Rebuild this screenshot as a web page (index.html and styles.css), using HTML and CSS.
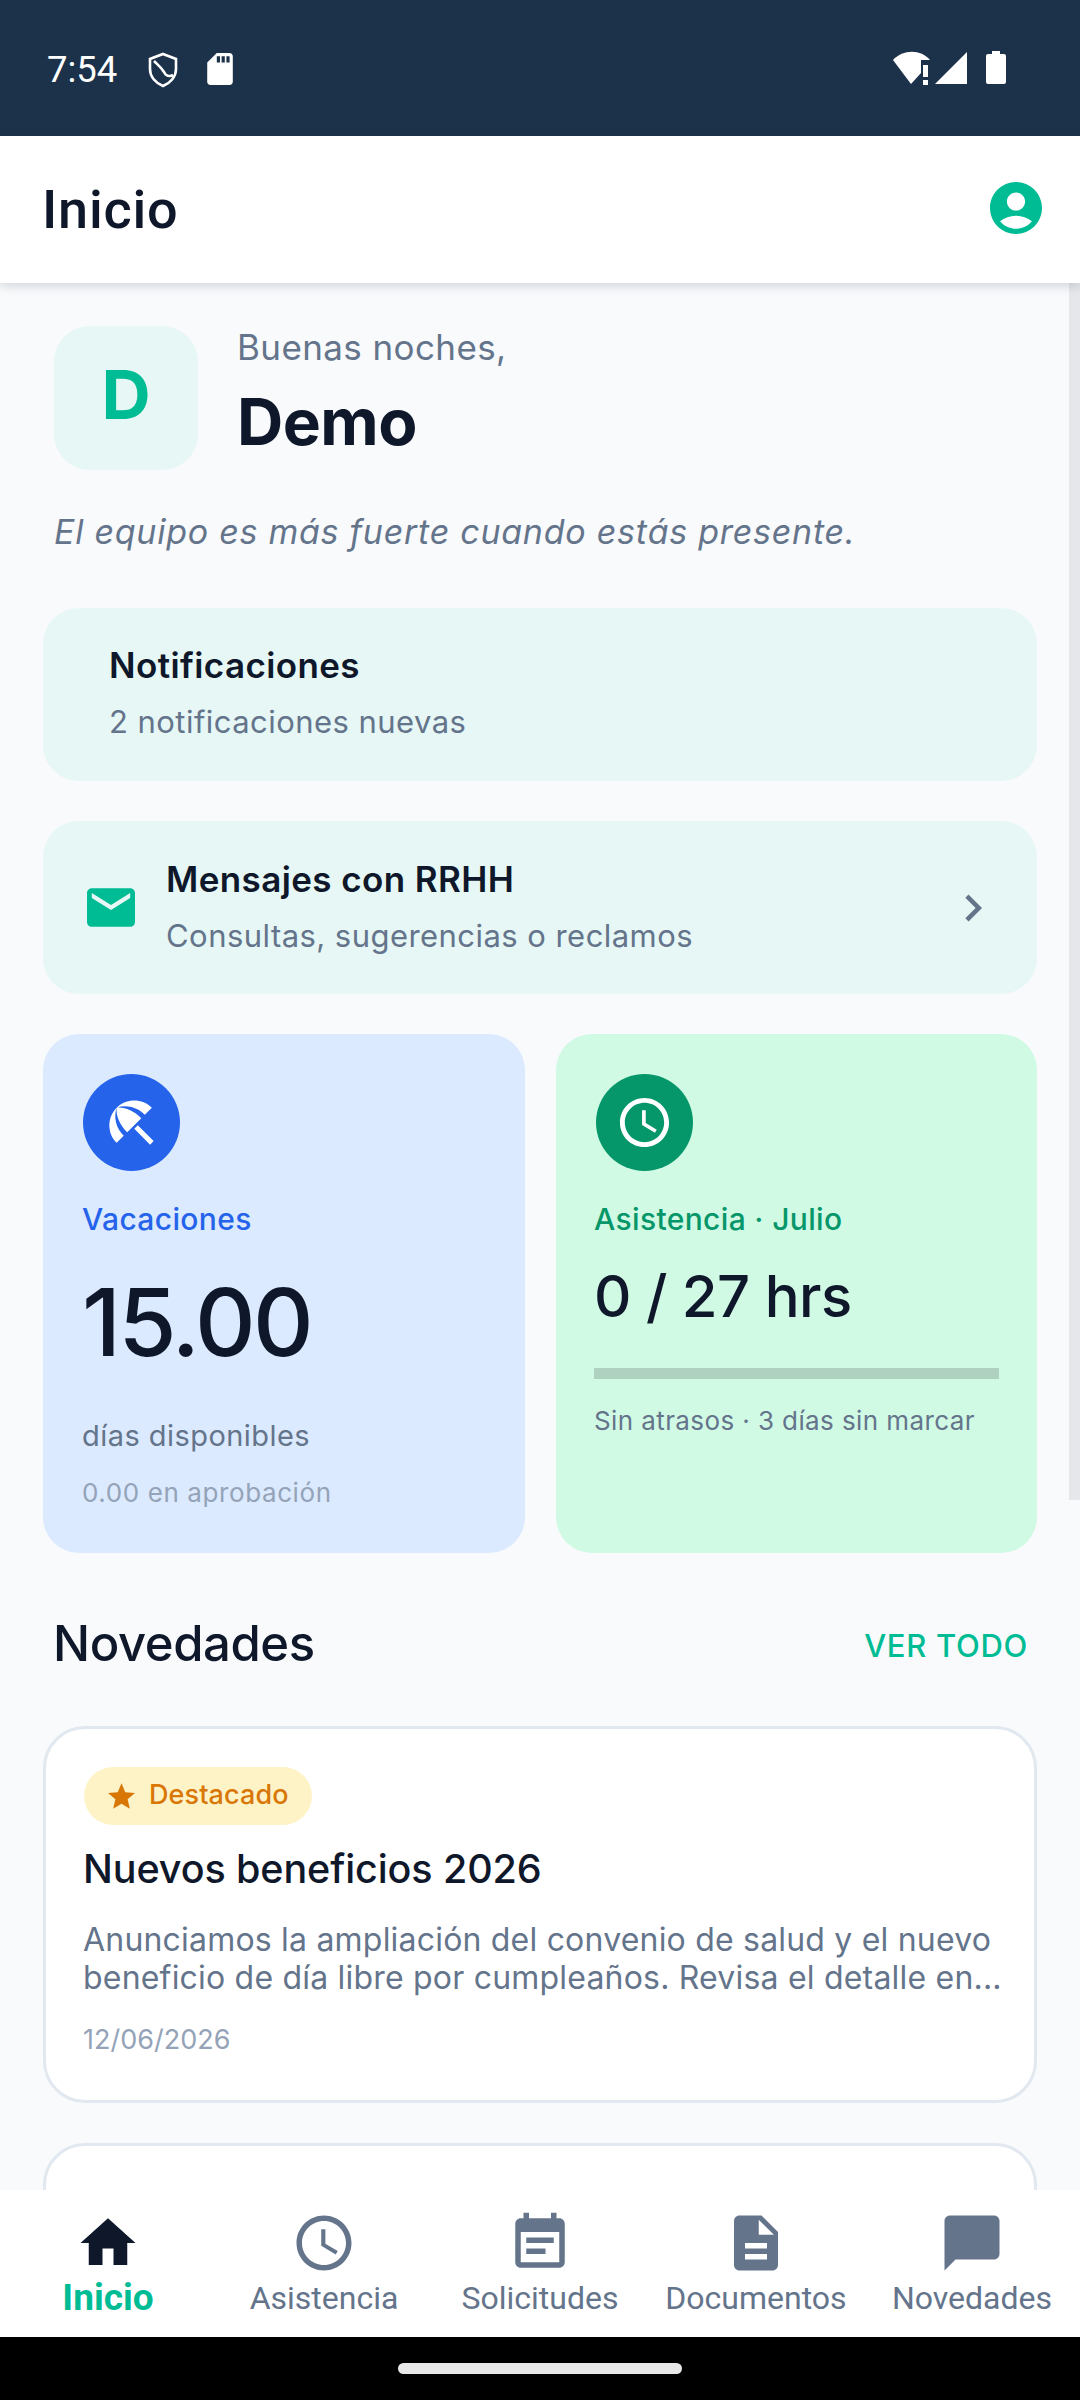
FILE: index.html
```html
<!DOCTYPE html>
<html lang="es">
<head>
<meta charset="utf-8">
<title>Inicio</title>
<link rel="stylesheet" href="styles.css">
</head>
<body>
<div class="screen">
  <header class="status">
    <span class="time">7:54</span>
    <svg class="st-shield" viewBox="0 0 30 36"><path d="M15 2 L28 7 V17 C28 25 22 31 15 34 C8 31 2 25 2 17 V7 Z M6 9 C10 13 13 15 16 20 C18 24 21 25 25 23" fill="none" stroke="#fff" stroke-width="2.6"/></svg>
    <svg class="st-sd" viewBox="4 2 16 20"><path fill="#fff" d="M18 2h-8L4.02 8 4 20c0 1.1.9 2 2 2h12c1.1 0 2-.9 2-2V4c0-1.1-.9-2-2-2zm-6 6h-2V4h2v4zm3 0h-2V4h2v4zm3 0h-2V4h2v4z"/></svg>
    <span class="st-spacer"></span>
    <svg class="st-wifi" viewBox="0 0 40 34"><path fill="#fff" d="M1 9 C11 -2 29 -2 38 9 H29 V22 L19 33 Z"/><path fill="#fff" d="M31 14h5v12h-5zM31 29h5v5h-5z"/></svg>
    <svg class="st-signal" viewBox="0 0 32 32"><path fill="#fff" d="M32 0V32H0Z"/></svg>
    <svg class="st-batt" viewBox="0 0 20 33"><path fill="#fff" d="M6 0h8v3h4c1.1 0 2 .9 2 2v26c0 1.1-.9 2-2 2H2c-1.1 0-2-.9-2-2V5c0-1.100.9-2 2-2h4z"/></svg>
  </header>

  <div class="appbar">
    <h1 class="appbar-title">Inicio</h1>
    <svg class="appbar-icon" viewBox="2 2 20 20"><path fill="#00bc94" d="M12 2C6.48 2 2 6.48 2 12s4.48 10 10 10 10-4.48 10-10S17.52 2 12 2zm0 4c1.93 0 3.5 1.570 3.5 3.5S13.93 13 12 13s-3.5-1.570-3.5-3.500S10.070 6 12 6zm0 14c-2.030 0-4.430-.820-6.140-2.880C7.550 15.800 9.680 15 12 15s4.450.800 6.140 2.120C16.430 19.180 14.030 20 12 20z"/></svg>
  </div>

  <main class="content">
    <div class="scrollbar"></div>
    <section class="hero">
      <div class="avatar">D</div>
      <div class="hero-text">
        <p class="greeting">Buenas noches,</p>
        <p class="name">Demo</p>
      </div>
    </section>
    <p class="quote">El equipo es más fuerte cuando estás presente.</p>

    <section class="tile tile-notif">
      <p class="tile-title">Notificaciones</p>
      <p class="tile-sub">2 notificaciones nuevas</p>
    </section>

    <section class="tile tile-msg">
      <svg class="msg-icon" viewBox="2 4 20 16"><path fill="#00bc94" d="M20 4H4c-1.100 0-1.990.900-1.990 2L2 18c0 1.100.900 2 2 2h16c1.100 0 2-.900 2-2V6c0-1.100-.900-2-2-2zm0 4l-8 5-8-5V6l8 5 8-5v2z"/></svg>
      <div class="msg-text">
        <p class="tile-title">Mensajes con RRHH</p>
        <p class="tile-sub">Consultas, sugerencias o reclamos</p>
      </div>
      <svg class="chevron" viewBox="0 0 24 24"><path fill="#64748b" d="M10 6L8.590 7.410 13.170 12l-4.580 4.590L10 18l6-6z"/></svg>
    </section>

    <section class="stats">
      <article class="stat stat-blue">
        <div class="stat-circle circle-blue">
          <svg viewBox="0 0 24 24"><path fill="#fff" d="M13.127 14.560l1.430-1.430 6.440 6.443L19.570 21zm4.293-5.730l2.860-2.860c-3.950-3.950-10.350-3.960-14.300-.020 3.930-1.300 8.310-.250 11.440 2.880zM5.950 5.980c-3.940 3.950-3.930 10.350.020 14.300l2.860-2.860C5.700 14.290 4.650 9.910 5.950 5.980zm.020-.020l-.010.010c-.380 3.010 1.170 6.880 4.300 10.020l5.730-5.730c-3.130-3.130-7.010-4.680-10.020-4.300z"/></svg>
        </div>
        <p class="stat-label label-blue">Vacaciones</p>
        <p class="stat-big">15.00</p>
        <p class="stat-desc">días disponibles</p>
        <p class="stat-pending">0.00 en aprobación</p>
      </article>
      <article class="stat stat-green">
        <div class="stat-circle circle-green">
          <svg viewBox="0 0 24 24"><path fill="#fff" d="M11.990 2C6.470 2 2 6.480 2 12s4.470 10 9.990 10C17.520 22 22 17.520 22 12S17.520 2 11.990 2zM12 20c-4.420 0-8-3.580-8-8s3.580-8 8-8 8 3.580 8 8-3.580 8-8 8zM12.500 7H11v6l5.250 3.150.750-1.230-4.500-2.670z"/></svg>
        </div>
        <p class="stat-label label-green">Asistencia · Julio</p>
        <p class="stat-hours">0 / 27 hrs</p>
        <div class="progress"></div>
        <p class="stat-note">Sin atrasos · 3 días sin marcar</p>
      </article>
    </section>

    <div class="section-head">
      <h2 class="section-title">Novedades</h2>
      <span class="section-link">VER TODO</span>
    </div>

    <article class="news">
      <span class="badge">
        <svg viewBox="2 2 20 19"><path fill="#d97706" d="M12 17.270L18.180 21l-1.640-7.030L22 9.240l-7.190-.610L12 2 9.190 8.630 2 9.240l5.460 4.730L5.820 21z"/></svg>
        <span class="badge-text">Destacado</span>
      </span>
      <h3 class="news-title">Nuevos beneficios 2026</h3>
      <p class="news-body">Anunciamos la ampliación del convenio de salud y el nuevo<br>beneficio de día libre por cumpleaños. Revisa el detalle en...</p>
      <p class="news-date">12/06/2026</p>
    </article>
    <article class="news news-next"></article>
  </main>

  <nav class="tabs">
    <div class="tab tab-active">
      <svg viewBox="0 0 24 24"><path fill="#0f172a" d="M10 20v-6h4v6h5v-8h3L12 3 2 12h3v8z"/></svg>
      <span>Inicio</span>
    </div>
    <div class="tab">
      <svg viewBox="0 0 24 24"><path fill="#64748b" d="M11.990 2C6.470 2 2 6.480 2 12s4.470 10 9.990 10C17.520 22 22 17.520 22 12S17.520 2 11.990 2zM12 20c-4.420 0-8-3.580-8-8s3.580-8 8-8 8 3.580 8 8-3.580 8-8 8zM12.500 7H11v6l5.250 3.150.750-1.230-4.500-2.670z"/></svg>
      <span>Asistencia</span>
    </div>
    <div class="tab">
      <svg viewBox="0 0 24 24"><path fill="#64748b" d="M17 10H7v2h10v-2zm2-7h-1V1h-2v2H8V1H6v2H5c-1.110 0-1.990.900-1.990 2L3 19c0 1.100.890 2 2 2h14c1.100 0 2-.900 2-2V5c0-1.100-.900-2-2-2zm0 16H5V8h14v11zm-5-5H7v2h7v-2z"/></svg>
      <span>Solicitudes</span>
    </div>
    <div class="tab">
      <svg viewBox="0 0 24 24"><path fill="#64748b" d="M14 2H6c-1.100 0-1.990.900-1.990 2L4 20c0 1.100.890 2 1.990 2H18c1.100 0 2-.900 2-2V8l-6-6zm2 16H8v-2h8v2zm0-4H8v-2h8v2zm-3-5V3.500L18.500 9H13z"/></svg>
      <span>Documentos</span>
    </div>
    <div class="tab">
      <svg viewBox="0 0 24 24"><path fill="#64748b" d="M20 2H4c-1.100 0-2 .900-2 2v18l4-4h14c1.100 0 2-.900 2-2V4c0-1.100-.900-2-2-2z"/></svg>
      <span>Novedades</span>
    </div>
  </nav>

  <footer class="gesture"><span class="gesture-pill"></span></footer>
</div>
</body>
</html>
```

FILE: styles.css
```css
* { box-sizing: border-box; margin: 0; padding: 0; }
html, body { width: 1080px; height: 2400px; overflow: hidden; background: #000; }
body { font-family: "Inter", "Liberation Sans", sans-serif; color: #0f172a; }
.screen { width: 1080px; height: 2400px; display: flex; flex-direction: column; }

/* status bar */
.status { height: 136px; flex: none; background: #1c324b; display: flex; align-items: flex-start; padding: 0 74px 0 47px; color: #fff; }
.time { font: 400 36.5px/42px "Roboto", sans-serif; margin-top: 49px; width: 101px; }
.st-shield { width: 30px; height: 36px; margin-top: 52px; }
.st-sd { width: 26px; height: 32px; margin: 53px 0 0 29px; }
.st-spacer { flex: 1; }
.st-wifi { width: 40px; height: 34px; margin-top: 51px; }
.st-signal { width: 32px; height: 32px; margin: 52px 0 0 3px; }
.st-batt { width: 20px; height: 33px; margin: 51px 0 0 19px; }

/* app bar */
.appbar { height: 147px; flex: none; background: #fff; display: flex; align-items: center; justify-content: space-between; padding: 0 38px 0 42px; box-shadow: 0 3px 10px rgba(15, 23, 42, .16); position: relative; z-index: 2; }
.appbar-title { font: 500 54px/60px "Roboto", sans-serif; letter-spacing: .8px; color: #0f172a; }
.appbar-icon { width: 52px; height: 52px; margin-bottom: 4px; }

/* scrolling content */
.content { flex: 1; min-height: 0; overflow: hidden; background: #f8fafc; position: relative; padding: 43px 43px 0; }
.scrollbar { position: absolute; top: 0; right: 0; width: 11px; height: 1217px; background: #e5e7eb; }

.hero { display: flex; margin-left: 11px; height: 144px; }
.avatar { width: 144px; height: 144px; border-radius: 36px; background: #e6f7f5; color: #00bc94; font-size: 68px; line-height: 136px; font-weight: 700; text-align: center; }
.hero-text { margin-left: 39px; }
.greeting { font-size: 35px; line-height: 42px; color: #64748b; margin-top: 0; letter-spacing: .4px; }
.name { font-size: 64px; line-height: 76px; font-weight: 700; margin-top: 16px; letter-spacing: -.5px; }
.quote { font-size: 34px; line-height: 40px; font-style: italic; color: #64748b; margin: 42px 0 0 11px; letter-spacing: .73px; }

.tile { height: 173px; border-radius: 36px; background: #e6f7f5; }
.tile-notif { margin-top: 56px; padding: 37px 66px; }
.tile-msg { margin-top: 40px; display: flex; align-items: center; padding: 0 37px 0 44px; }
.tile-title { font-size: 35px; line-height: 40px; font-weight: 600; letter-spacing: .4px; }
.tile-sub { font-size: 31px; line-height: 38px; color: #64748b; margin-top: 18px; letter-spacing: .45px; }
.msg-icon { width: 48px; height: 39px; flex: none; }
.msg-text { flex: 1; margin: -1px 0 0 31px; }
.chevron { width: 54px; height: 54px; flex: none; }

.stats { display: flex; gap: 31px; margin-top: 40px; height: 519px; }
.stat { flex: 1; border-radius: 36px; padding: 40px 38px; position: relative; }
.stat-blue { background: #dbeafe; padding-left: 39px; }
.stat-green { background: #d1fae5; }
.stat-circle { width: 97px; height: 97px; margin-left: 2px; border-radius: 50%; display: flex; align-items: center; justify-content: center; }
.circle-blue { background: #2563eb; margin-left: 1px; }
.circle-green { background: #059669; }
.stat-circle svg { width: 59px; height: 59px; }
.stat-label { font-size: 30px; line-height: 34px; font-weight: 500; margin-top: 31px; letter-spacing: .35px; }
.label-blue { color: #2563eb; }
.label-green { color: #059669; }
.stat-big { font-size: 94px; line-height: 114px; font-weight: 500; margin-top: 29px; letter-spacing: -2.6px; }
.stat-desc { font-size: 29px; line-height: 36px; color: #64748b; margin-top: 39px; letter-spacing: .45px; }
.stat-pending { font-size: 26px; line-height: 32px; color: #94a3b8; margin-top: 23px; letter-spacing: .6px; }
.stat-hours { font-size: 58px; line-height: 70px; font-weight: 500; margin-top: 25px; letter-spacing: -.5px; }
.progress { height: 11px; background: #afd2c0; margin-top: 37px; }
.stat-note { font-size: 26px; line-height: 32px; color: #64748b; margin-top: 26px; letter-spacing: .4px; }

.section-head { display: flex; justify-content: space-between; align-items: center; height: 60px; margin: 61px 9px 0 10px; }
.section-title { font-size: 49px; line-height: 56px; font-weight: 500; letter-spacing: -.4px; }
.section-link { font-size: 31px; line-height: 36px; font-weight: 500; color: #00bc94; letter-spacing: .7px; margin-top: 4px; }

.news { height: 377px; margin-top: 52px; background: #fff; border: 3px solid #e2e8f0; border-radius: 42px; padding: 38px 38px 38px 37px; }
.news-next { margin-top: 40px; }
.badge { display: inline-flex; align-items: center; gap: 14px; height: 58px; margin-left: 1px; padding: 0 23px 0 24px; border-radius: 29px; background: #fef3c7; color: #d97706; font-size: 27px; font-weight: 500; letter-spacing: .1px; }
.badge svg { width: 27px; height: 26px; }
.badge-text { margin-top: -3px; }
.news-title { font-size: 39.5px; line-height: 46px; font-weight: 500; margin-top: 21px; letter-spacing: -.1px; }
.news-body { font-size: 32px; line-height: 38px; color: #64748b; margin-top: 29px; letter-spacing: .2px; white-space: nowrap; }
.news-date { font-size: 27px; line-height: 34px; color: #94a3b8; margin-top: 26px; }

/* tabs */
.tabs { height: 147px; flex: none; background: #fff; display: grid; grid-template-columns: repeat(5, 216px); position: relative; z-index: 2; }
.tab { display: flex; flex-direction: column; align-items: center; padding-top: 20px; font: 400 32px/36px "Roboto", sans-serif; color: #64748b; }
.tab svg { width: 66px; height: 66px; flex: none; }
.tab span { margin-top: 4px; white-space: nowrap; }
.tab-active { font-weight: 700; font-size: 37px; color: #00bc94; }

.gesture { height: 63px; flex: none; background: #000; display: flex; justify-content: center; padding-top: 26px; }
.gesture-pill { width: 284px; height: 11px; border-radius: 6px; background: #e8e8e8; }
```
